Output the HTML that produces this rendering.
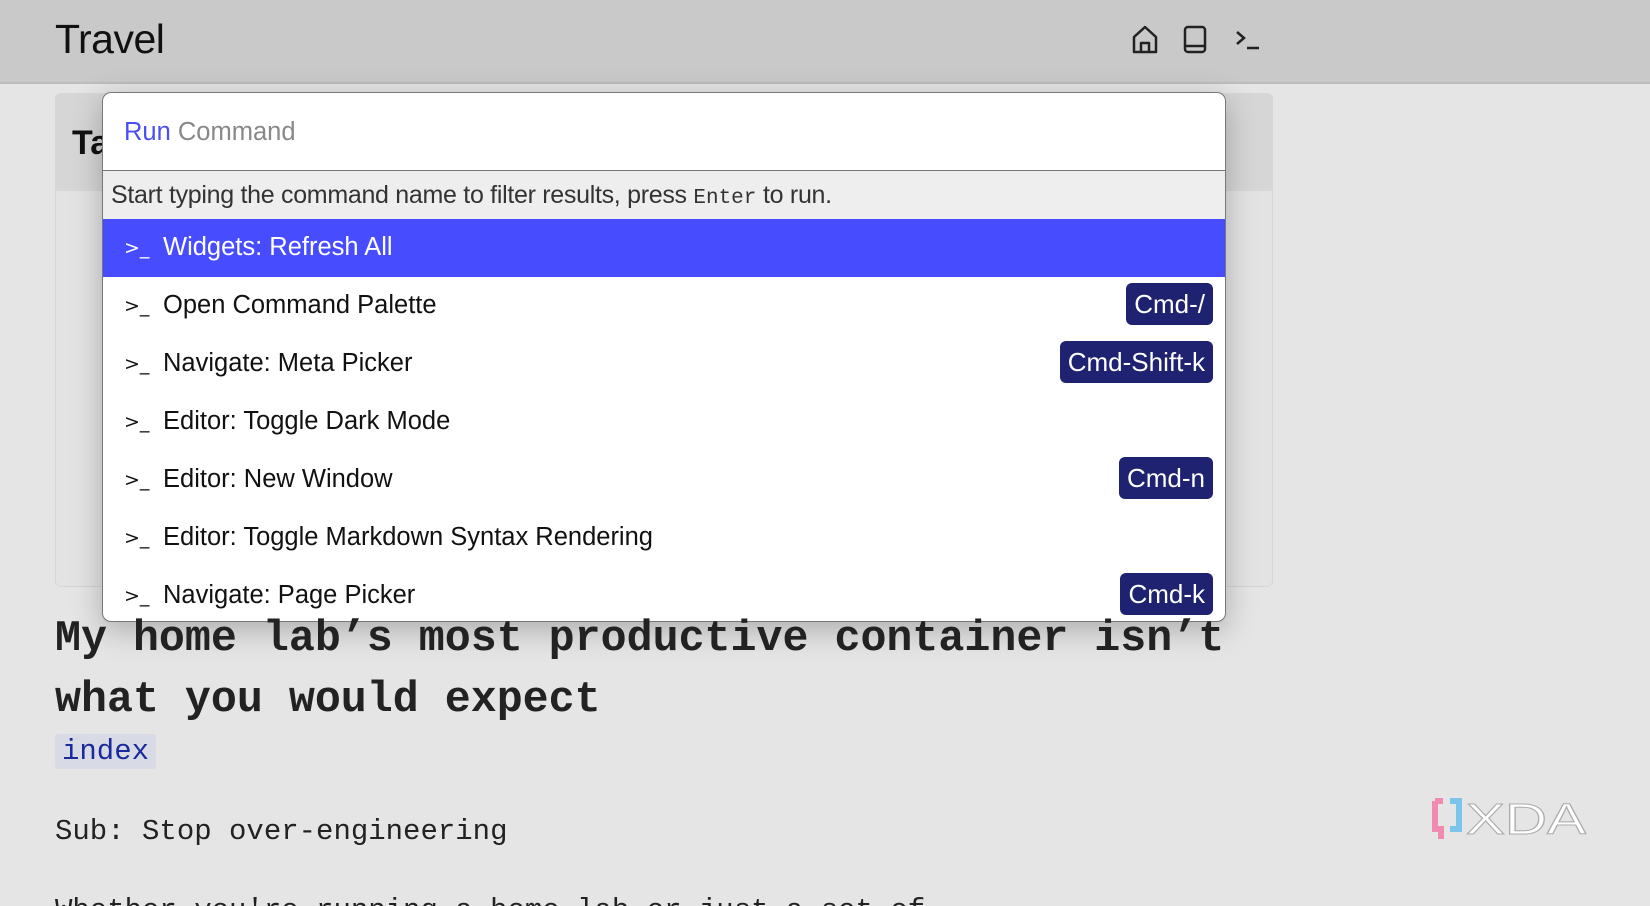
<!DOCTYPE html>
<html style="width:1650px;height:906px;overflow:hidden"><head><meta charset="utf-8"><style>
*{margin:0;padding:0;box-sizing:border-box}
body{width:1650px;height:906px;overflow:hidden;background:#e5e5e5;font-family:"Liberation Sans",sans-serif;position:relative}
.hdr{position:absolute;left:0;top:0;width:1650px;height:84px;background:#c9c9c9;border-bottom:2px solid #bdbdbd}
.title{position:absolute;left:55px;top:16px;font-size:41px;color:#111;letter-spacing:-0.5px}
.ic{position:absolute;top:24px}
.panel{position:absolute;left:55px;top:93px;width:1218px;height:494px;background:#e3e3e3;border:1px solid #d6d6d6;border-radius:6px;overflow:hidden}
.panel .ph{height:97px;background:#d6d6d6}
.panel .ta{position:absolute;left:16px;top:30px;font-size:34px;font-weight:bold;color:#111}
.modal{position:absolute;left:102px;top:92px;width:1124px;height:530px;background:#fff;border:1px solid #777;border-radius:9px;overflow:hidden;box-shadow:0 8px 30px rgba(0,0,0,.25)}
.inp{height:78px;border-bottom:1px solid #777;padding:25px 0 0 21px;font-size:25.5px}
.help{height:48px;background:#eee;padding:10px 0 0 8px;font-size:25px;color:#333;letter-spacing:-0.3px}
.help code{font-family:"Liberation Mono",monospace;font-size:21px;letter-spacing:0}
.row{height:58px;position:relative;font-size:25.5px;color:#111}
.row .p{position:absolute;left:21px;top:18px;font-size:19px;font-family:"DejaVu Sans",sans-serif}
.row .t{position:absolute;left:60px;top:14px}
.row.sel{background:#474cff;color:#fff}
.k{position:absolute;right:12px;top:6px;height:42px;background:#1f2270;color:#fff;border-radius:6px;padding:6px 8px 0;font-size:26px}
.mono{font-family:"Liberation Mono","DejaVu Sans Mono",monospace}
h1{position:absolute;left:55px;top:609px;font-family:"Liberation Mono",monospace;font-weight:bold;font-size:43.3px;line-height:61px;color:#222;width:1260px}
.tag{position:absolute;left:55px;top:734px;height:35px;width:101px;background:#d8dbe6;border-radius:3px;color:#1a2a9c;font-size:29px;padding:1px 0 0 7px}
.sub{position:absolute;left:55px;top:815px;font-size:29px;color:#222}
.last{position:absolute;left:55px;top:896px;font-size:29px;line-height:1;color:#222}
</style></head><body>
<div class="hdr">
<div class="title">Travel</div>
<svg class="ic" style="left:1130px" width="30" height="32" viewBox="0 0 30 32" fill="none" stroke="#222" stroke-width="2.5" stroke-linejoin="round"><path d="M4 13 L15 3 L26 13 V28 H4 Z"/><path d="M11 28 V19 H19 V28"/></svg>
<svg class="ic" style="left:1182px" width="26" height="32" viewBox="0 0 26 32" fill="none" stroke="#222" stroke-width="2.5" stroke-linejoin="round"><rect x="3" y="3" width="20" height="25" rx="3"/><path d="M3 22 H23"/></svg>
<svg class="ic" style="left:1233px" width="30" height="32" viewBox="0 0 30 32" fill="none" stroke="#222" stroke-width="2.5"><path d="M4 8 L11 14 L4 20"/><path d="M14 24 H26"/></svg>
</div>
<div class="panel"><div class="ph"></div><div class="ta">Ta</div></div>
<div class="modal">
<div class="inp"><span style="color:#4b4ef0">Run</span> <span style="color:#888">Command</span></div>
<div class="help">Start typing the command name to filter results, press <code>Enter</code> to run.</div>
<div class="row sel"><span class="p">&gt;_</span><span class="t">Widgets: Refresh All</span></div>
<div class="row"><span class="p">&gt;_</span><span class="t">Open Command Palette</span><span class="k">Cmd-/</span></div>
<div class="row"><span class="p">&gt;_</span><span class="t">Navigate: Meta Picker</span><span class="k">Cmd-Shift-k</span></div>
<div class="row"><span class="p">&gt;_</span><span class="t">Editor: Toggle Dark Mode</span></div>
<div class="row"><span class="p">&gt;_</span><span class="t">Editor: New Window</span><span class="k">Cmd-n</span></div>
<div class="row"><span class="p">&gt;_</span><span class="t">Editor: Toggle Markdown Syntax Rendering</span></div>
<div class="row"><span class="p">&gt;_</span><span class="t">Navigate: Page Picker</span><span class="k">Cmd-k</span></div>
</div>
<h1>My home lab’s most productive container isn’t what you would expect</h1>
<div class="tag mono">index</div>
<div class="sub mono">Sub: Stop over-engineering</div>
<div class="last mono">Whether you're running a home lab or just a set of</div>
<svg style="position:absolute;left:1430px;top:795px" width="165" height="50" viewBox="0 0 165 50">
<path d="M5 6 H13 M5 6 V34 H11 V44" stroke="#f08ab0" stroke-width="6" fill="none"/>
<path d="M20 6 H29 V34 H20" stroke="#7cc4ec" stroke-width="6" fill="none"/>
<text x="36" y="39" font-family="Liberation Sans" font-size="44" textLength="120" lengthAdjust="spacingAndGlyphs" fill="#fff" stroke="#aaa" stroke-width="1">XDA</text>
</svg>
</body></html>
